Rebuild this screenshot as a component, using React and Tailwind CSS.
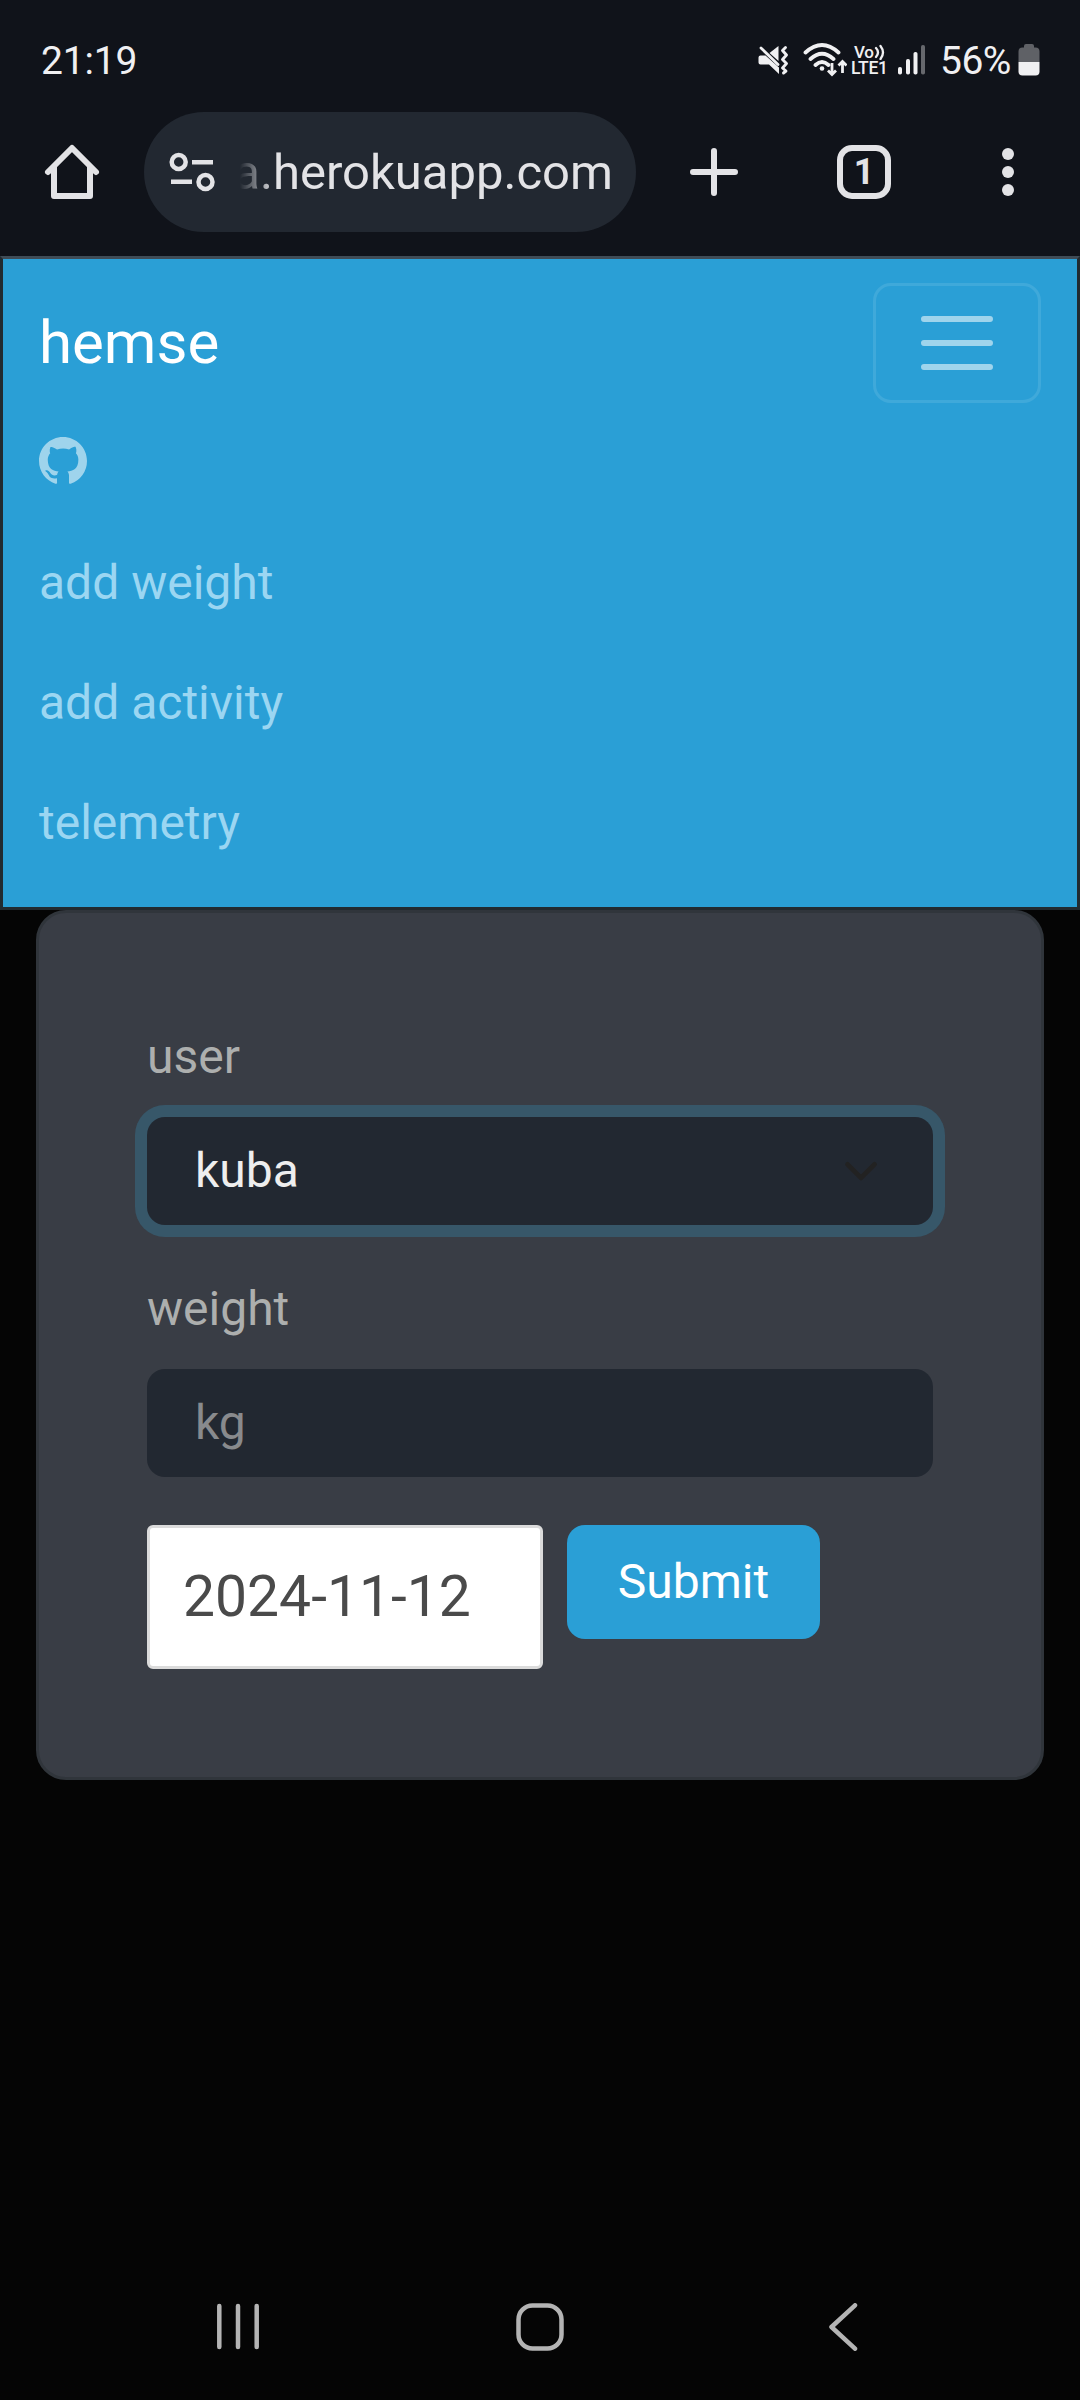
function StatusBar() {
  return (
    <div className="flex h-[112px] items-start justify-between px-[40px] pt-[37px] text-[#f0f0f2]">
      <span className="pl-px pt-px text-[39px] leading-[46px] tracking-[-0.2px]">21:19</span>
      <div className="flex h-[46px] items-start">
        <svg className="mr-[14px] mt-[8px]" width="31" height="32" viewBox="758 45 31 32" fill="none" stroke="currentColor">
          <path d="M758.500 57.500q0-2 2-2h5l13.500 12v6.500l-10-9.500h-8.500q-2 0-2-2z" fill="currentColor" stroke="none" />
          <path d="M769.500 53l9-7v15z" fill="currentColor" stroke="none" />
          <path d="M761 48L778 64.500" strokeWidth="2.800" strokeLinecap="round" />
          <path d="M785.500 47.500l-3 3 4 4.500-4 4.500 4 4-4 4.500 3.500 3-2.500 2" strokeWidth="2.900" strokeLinecap="round" strokeLinejoin="round" />
        </svg>
        <svg className="mr-[4px] mt-[5px]" width="44" height="36" viewBox="801 42 44 36" fill="none" stroke="currentColor">
          <path d="M803.500 52.500Q820 37.500 836.500 52.500M808.500 59Q820 48.500 831.500 59M813.500 65Q820 59 826.500 65" strokeWidth="3.800" strokeLinecap="round" />
          <circle cx="820" cy="68.500" r="2.300" fill="currentColor" stroke="none" />
          <path d="M830 63v11M826 70.500l4 4 4-4M840.500 73V62M836.500 65.500l4-4 4 4" strokeWidth="2.800" />
        </svg>
        <div className="flex w-[47px] flex-col items-start pt-[7px] font-medium">
          <div className="flex h-[16px] items-start pl-[3px] text-[17px] leading-[16px] tracking-[-0.3px]">
            <span>Vo</span>
            <svg width="12" height="16" viewBox="0 0 12 16" fill="none" stroke="currentColor" strokeWidth="2.300" strokeLinecap="round">
              <path d="M2 4q4 4.500 0 9M6.500 2q5 6.500 0 13" />
            </svg>
          </div>
          <span className="h-[16px] text-[17.5px] leading-[17px] tracking-[-0.3px]">LTE1</span>
        </div>
        <svg className="mr-[14px] mt-[8px]" width="28" height="30" viewBox="898 45 28 30" fill="currentColor">
          <rect x="898" y="67" width="4" height="7.500" rx="1.800" />
          <rect x="906" y="59" width="4" height="15.500" rx="1.800" />
          <rect x="913.500" y="52" width="4" height="22.500" rx="1.800" />
          <rect x="921" y="45" width="4" height="29.500" rx="1.800" fill="#66686d" />
        </svg>
        <span className="w-[78px] pt-px text-[39px] leading-[46px] tracking-[-0.5px]">56%</span>
        <svg className="mt-[7px]" width="22" height="32" viewBox="0 0 22 32">
          <path d="M6 2q0-2 2-2h6q2 0 2 2v1.500h1.500q4 0 4 4V18H.5V7.500q0-4 4-4H6z" fill="#5f6166" />
          <path d="M.5 18h21v9.500q0 4-4 4h-13q-4 0-4-4z" fill="currentColor" />
        </svg>
      </div>
    </div>
  );
}

function Toolbar() {
  return (
    <div className="flex h-[144px] items-start text-[#e3e3e6]">
      <svg className="ml-[42px] mt-[30px]" width="60" height="60" viewBox="42 142 60 60" fill="none" stroke="currentColor" strokeWidth="6" strokeLinecap="round" strokeLinejoin="round">
        <path d="M48 172l24-24 24 24M54 167v29h36v-29" />
      </svg>
      <div className="ml-[42px] flex h-[120px] w-[492px] items-center rounded-full bg-[#222831] pl-[24px]">
        <svg width="48" height="42" viewBox="168 151 48 42" fill="none" stroke="currentColor" strokeWidth="4.500">
          <circle cx="178.700" cy="162" r="7" />
          <circle cx="205.500" cy="182" r="7" />
          <path d="M192 162.300h21M171 181.800h21" />
        </svg>
        <div className="ml-[20px] flex w-[377px] justify-end whitespace-nowrap pt-[2px] text-[49px] leading-[60px] [mask-image:linear-gradient(to_right,transparent_4px,black_38px)]">
          <span>a.herokuapp.com</span>
        </div>
      </div>
      <svg className="ml-[54px] mt-[36px]" width="48" height="48" viewBox="0 0 48 48" fill="none" stroke="currentColor" strokeWidth="6" strokeLinecap="round">
        <path d="M24 3v42M3 24h42" />
      </svg>
      <div className="ml-[99px] mt-[33px] flex h-[54px] w-[54px] items-center justify-center rounded-[15px] border-[6px] border-current text-[36px] font-bold leading-[42px]">
        1
      </div>
      <svg className="ml-[111px] mt-[36px]" width="12" height="48" viewBox="0 0 12 48" fill="currentColor">
        <circle cx="6" cy="6" r="6" />
        <circle cx="6" cy="24" r="6" />
        <circle cx="6" cy="42" r="6" />
      </svg>
    </div>
  );
}

function Navbar() {
  return (
    <nav className="h-[654px] border-[3px] border-[#212b31] border-t-[#3f4c57] bg-[#2a9fd6] px-[36px] py-[24px] text-[48px] leading-[72px] text-[#9bd6f2]">
      <div className="flex h-[120px] items-center justify-between">
        <a className="text-[60px] leading-[90px] text-white">hemse</a>
        <button className="flex h-[120px] w-[168px] items-center justify-center rounded-[18px] border-[3px] border-white/10">
          <svg width="90" height="90" viewBox="0 0 30 30">
            <path d="M4 7h22M4 15h22M4 23h22" fill="none" stroke="rgba(255,255,255,0.55)" strokeWidth="2" strokeLinecap="round" />
          </svg>
        </button>
      </div>
      <a className="flex h-[120px] items-start pt-[34px]">
        <svg width="48" height="48" viewBox="0 0 16 16" fill="rgba(255,255,255,0.55)">
          <path d="M8 0C3.580 0 0 3.580 0 8c0 3.540 2.290 6.530 5.470 7.590.4.070.55-.17.55-.38 0-.19-.01-.82-.01-1.490-2.010.37-2.530-.49-2.690-.94-.09-.23-.48-.94-.82-1.130-.28-.15-.68-.52-.01-.53.63-.01 1.080.58 1.230.82.72 1.210 1.870.87 2.330.66.07-.52.28-.87.51-1.070-1.780-.2-3.640-.89-3.640-3.950 0-.87.31-1.590.82-2.150-.08-.2-.36-1.020.08-2.120 0 0 .67-.21 2.200.82.64-.18 1.320-.27 2-.27s1.360.09 2 .27c1.530-1.040 2.200-.82 2.200-.82.44 1.100.16 1.920.08 2.120.51.56.82 1.270.82 2.150 0 3.070-1.870 3.750-3.650 3.950.29.25.54.73.54 1.480 0 1.070-.01 1.930-.01 2.200 0 .21.15.46.55.38A8.010 8.010 0 0 0 16 8c0-4.420-3.580-8-8-8" />
        </svg>
      </a>
      <a className="block py-[24px]">add weight</a>
      <a className="block py-[24px]">add activity</a>
      <a className="block py-[24px]">telemetry</a>
    </nav>
  );
}

function WeightForm() {
  return (
    <form className="mx-[36px] h-[870px] rounded-[30px] border-[3px] border-[#30353b] bg-[#393d45] px-[108px] pt-[108px] text-[48px] leading-[72px] text-[#adafae]">
      <label className="block">user</label>
      <div className="mt-[24px] flex h-[108px] items-center justify-between rounded-[18px] bg-[#222831] px-[48px] text-[#eeeeee] shadow-[0_0_0_12px_#375769]">
        <span>kuba</span>
        <svg width="48" height="48" viewBox="0 0 16 16" fill="none" stroke="#222222" strokeWidth="1.600" strokeLinecap="round" strokeLinejoin="round">
          <path d="m3.500 5.800 4.500 4.500 4.500-4.500" />
        </svg>
      </div>
      <label className="mt-[48px] block">weight</label>
      <div className="mt-[24px] flex h-[108px] items-center rounded-[18px] bg-[#222831] pl-[48px] text-[#888a8d]">kg</div>
      <div className="mt-[48px] flex items-start gap-[24px]">
        <div className="flex h-[144px] w-[396px] items-center rounded-[6px] border-[3px] border-[#dbdbdb] bg-white pl-[33px] text-[57px] text-[#4a4a4a]">
          2024-11-12
        </div>
        <button type="button" className="h-[114px] w-[253px] rounded-[18px] bg-[#2a9fd6] text-white">Submit</button>
      </div>
    </form>
  );
}

function SystemNav() {
  return (
    <div className="mt-auto flex h-[146px] items-center justify-between px-[214px]">
      <svg width="48" height="48" viewBox="0 0 48 48" fill="none" stroke="#b4b4b4" strokeWidth="4.500" strokeLinecap="round">
        <path d="M5.300 3v41M24 3v41M42.700 3v41" />
      </svg>
      <svg width="48" height="48" viewBox="0 0 48 48" fill="none" stroke="#b4b4b4" strokeWidth="4.500">
        <rect x="2.500" y="2.500" width="43" height="43" rx="14" />
      </svg>
      <svg width="48" height="48" viewBox="0 0 48 48" fill="none" stroke="#b4b4b4" strokeWidth="4.500" strokeLinecap="round" strokeLinejoin="round">
        <path d="M37 2.300L13.500 24L37 45.700" />
      </svg>
    </div>
  );
}

export default function App() {
  return (
    <div className="flex h-[2400px] w-[1080px] flex-col overflow-hidden bg-[#050505] font-[Roboto,sans-serif]">
      <header className="bg-[#10131a]">
        <StatusBar />
        <Toolbar />
      </header>
      <Navbar />
      <WeightForm />
      <SystemNav />
    </div>
  );
}
